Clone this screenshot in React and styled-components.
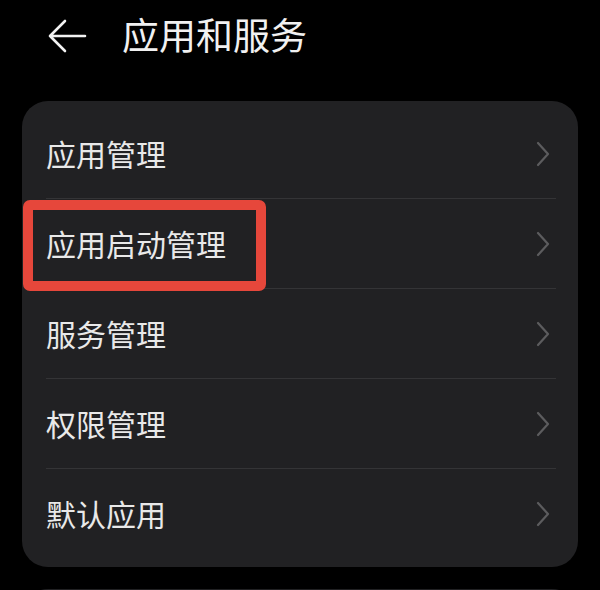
import React from "react";
import styled, { createGlobalStyle } from "styled-components";

const GlobalStyle = createGlobalStyle`
  html, body {
    margin: 0;
    padding: 0;
    background: #000;
  }
  body {
    font-family: "Noto Sans CJK SC", "Noto Sans", sans-serif;
    color: #ececec;
    overflow: hidden;
  }
`;

const items = [
  { label: "应用管理" },
  { label: "应用启动管理", marked: true },
  { label: "服务管理" },
  { label: "权限管理" },
  { label: "默认应用" },
];

const BackIcon = () => (
  <svg width="40" height="36" viewBox="0 0 40 36" fill="none">
    <path
      d="M18 3 L3 18 L18 33 M3 18 H38"
      stroke="#f2f2f2"
      strokeWidth="2.6"
      strokeLinecap="round"
      strokeLinejoin="round"
    />
  </svg>
);

const Chevron = () => (
  <svg width="14" height="26" viewBox="0 0 14 26" fill="none">
    <path
      d="M2 2 L12 13 L2 24"
      stroke="#5c5c5e"
      strokeWidth="2.2"
      strokeLinecap="round"
      strokeLinejoin="round"
    />
  </svg>
);

const App = () => {
  return (
    <Page>
      <GlobalStyle />
      <Header>
        <BackButton>
          <BackIcon />
        </BackButton>
        <Title>应用和服务</Title>
      </Header>
      <Card>
        {items.map((item, i) => (
          <Row key={item.label} $last={i === items.length - 1}>
            <Label>{item.label}</Label>
            <Chevron />
            {item.marked && <Highlight />}
          </Row>
        ))}
      </Card>
      <Card />
    </Page>
  );
};

export default App;

const Page = styled.div`
  width: 600px;
  height: 590px;
  background: #000;
  overflow: hidden;
`;

const Header = styled.div`
  height: 72px;
  display: flex;
  align-items: center;
  padding-left: 47px;
  margin-bottom: 29px;
`;

const BackButton = styled.div`
  display: flex;
  align-items: center;
  width: 75px;
  margin-top: -1px;
`;

const Title = styled.div`
  font-size: 37px;
  color: #f1f1f1;
  line-height: 1;
  margin-top: -4px;
`;

const Card = styled.div`
  margin: 0 22px 22px;
  background: #212123;
  border-radius: 26px;
  padding: 8px 0;
  min-height: 40px;
`;

const Row = styled.div`
  position: relative;
  height: 90px;
  display: flex;
  align-items: center;
  justify-content: space-between;
  padding: 0 28px 0 24px;

  &::after {
    content: "";
    display: ${(p) => (p.$last ? "none" : "block")};
    position: absolute;
    left: 24px;
    right: 22px;
    bottom: 0;
    height: 1.5px;
    background: #343436;
  }
`;

const Label = styled.div`
  font-size: 30px;
  color: #e9e9e9;
  line-height: 1;
  margin-top: -3px;
`;

const Highlight = styled.div`
  position: absolute;
  left: 1px;
  top: 1px;
  width: 243px;
  height: 91px;
  box-sizing: border-box;
  border: 10px solid #e6473b;
  border-radius: 7px;
  z-index: 2;
`;
